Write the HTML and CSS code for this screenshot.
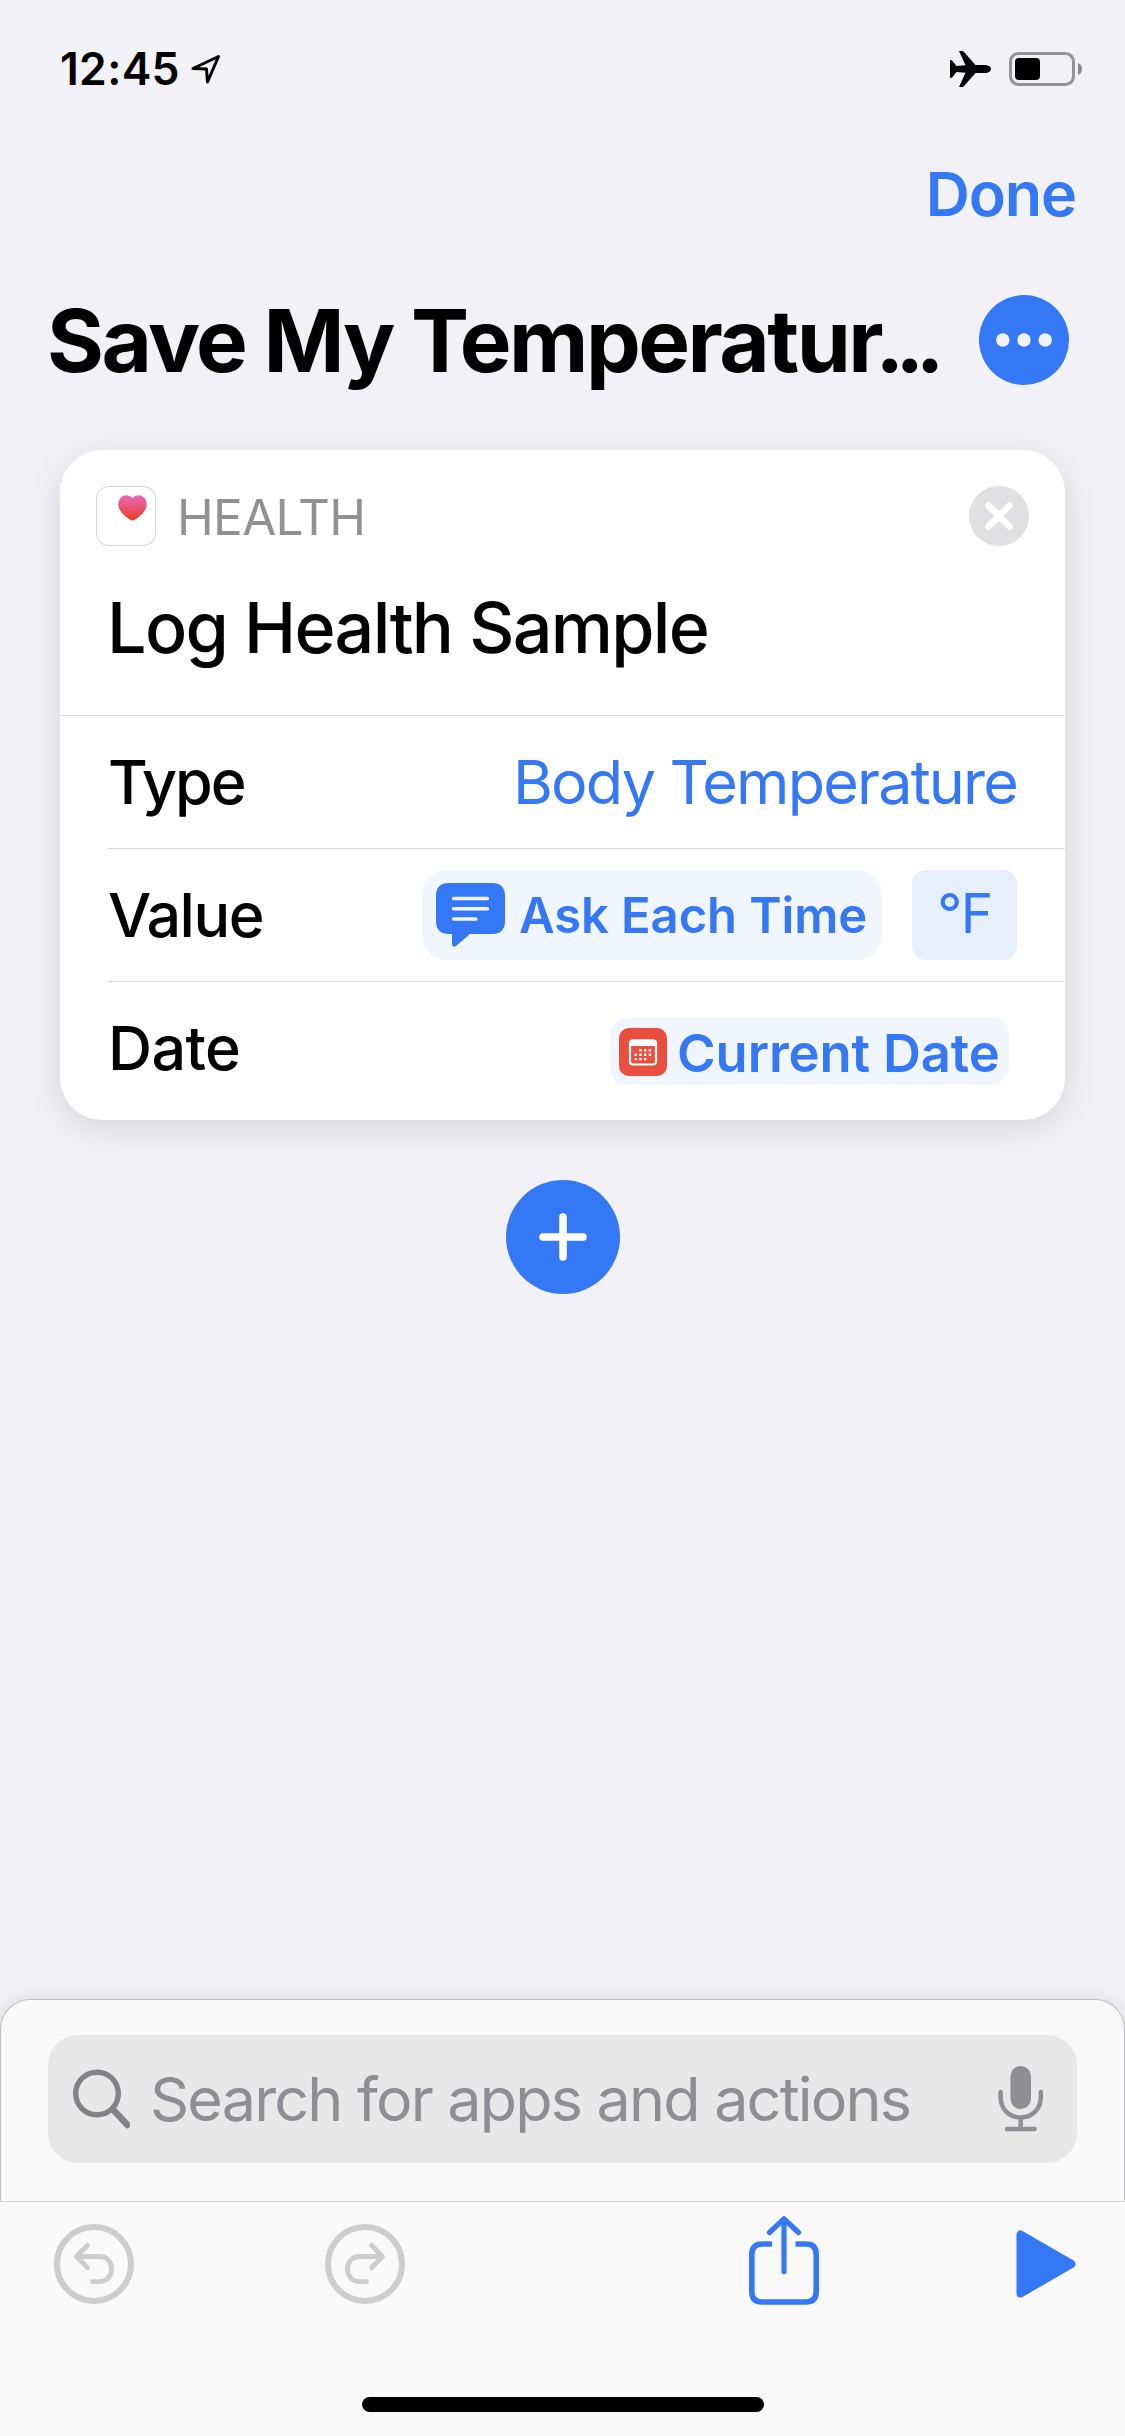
FILE: index.html
```html
<!DOCTYPE html>
<html lang="en">
<head>
    <meta charset="UTF-8">
    <meta name="viewport" content="width=device-width, initial-scale=1.0">
    <title>Save My Temperature</title>
    <link rel="stylesheet" href="styles.css">
</head>
<body>
    <div class="status-bar">
        <div class="status-left">
            <span class="time">12:45</span>
            <svg class="location" width="32" height="32" viewBox="0 0 32 32">
                <path d="M3 16.5 L28.5 4.5 L17.5 30 L16.5 17 Z" fill="none" stroke="#000" stroke-width="3" stroke-linejoin="round"/>
            </svg>
        </div>
        <div class="status-right">
            <svg width="41" height="36" viewBox="0 0 41 36">
                <path d="M9 0 H12 Q13.5 0 14.5 1.5 L25.5 14 H36 Q41 15 41 18 Q41 21 36 22 H25.5 L14.5 34.5 Q13.5 36 12 36 H9 L15.5 21.8 L6.5 21 L2.5 26 Q1.8 27 0 27 V9 Q1.8 9 2.5 10 L6.5 15 L15.5 14.2 Z"/>
            </svg>
            <svg width="74" height="34" viewBox="0 0 74 34">
                <rect x="1.5" y="1.5" width="63" height="31" rx="8" fill="none" stroke="#949397" stroke-width="3"/>
                <rect x="6" y="6" width="25" height="22" rx="4"/>
                <path d="M69 11 Q73 12.5 73 17 Q73 21.5 69 23 Z" fill="#8a898d"/>
            </svg>
        </div>
    </div>

    <div class="nav-bar">
        <a class="done">Done</a>
    </div>

    <div class="title-row">
        <h1>Save My Temperatur<span class="dots">...</span></h1>
        <svg width="90" height="90" viewBox="0 0 90 90">
            <circle cx="45" cy="45" r="45" fill="#3478f6"/>
            <circle cx="23.8" cy="45" r="6.7" fill="#f2f1f6"/>
            <circle cx="45" cy="45" r="6.7" fill="#f2f1f6"/>
            <circle cx="66.2" cy="45" r="6.7" fill="#f2f1f6"/>
        </svg>
    </div>

    <div class="content">
        <div class="card">
            <div class="card-header">
                <div class="app-row">
                    <div class="app-icon">
                        <svg width="60" height="60" viewBox="0 0 60 60">
                            <defs>
                                <linearGradient id="heart" x1="0" y1="0" x2="0" y2="1">
                                    <stop offset="0" stop-color="#eb6abc"/>
                                    <stop offset="1" stop-color="#ea3a23"/>
                                </linearGradient>
                            </defs>
                            <path d="M36.5 12 C33 8.5 28.5 8.5 25.5 11 C21 15 21.5 22 26 27 C29 30.5 34 34 36.5 34.6 C39 34 44 30.5 47 27 C51.5 22 52 15 47.5 11 C44.5 8.5 40 8.5 36.5 12 Z" fill="url(#heart)"/>
                        </svg>
                    </div>
                    <span class="app-name">HEALTH</span>
                    <svg width="60" height="60" viewBox="0 0 60 60">
                        <circle cx="30" cy="30" r="30" fill="#e0e0e2"/>
                        <path d="M19.5 19.5 L40.5 40.5 M40.5 19.5 L19.5 40.5" stroke="#fff" stroke-width="6.5" stroke-linecap="round"/>
                    </svg>
                </div>
                <h2>Log Health Sample</h2>
            </div>
            <div class="row">
                <span class="label type-label">Type</span>
                <span class="value">Body Temperature</span>
            </div>
            <div class="row">
                <span class="label">Value</span>
                <div class="ask-pill">
                    <svg width="70" height="65" viewBox="0 0 70 65">
                        <path d="M13 0 H56 Q69 0 69 13 V38 Q69 51 56 51 H34 L20 63 Q16 65 16 61 V51 H13 Q0 51 0 38 V13 Q0 0 13 0 Z" fill="#3478f6"/>
                        <path d="M17.5 15.5 H51.5 M17.5 25.7 H51.5 M17.5 36 H40" stroke="#f0f5fe" stroke-width="3.4" stroke-linecap="round"/>
                    </svg>
                    <span class="ask-text">Ask Each Time</span>
                </div>
                <div class="unit">°F</div>
            </div>
            <div class="row">
                <span class="label date-label">Date</span>
                <div class="date-pill">
                    <svg width="48" height="48" viewBox="0 0 48 48">
                        <rect width="48" height="48" rx="10" fill="#ea4e3d"/>
                        <rect x="11" y="12.5" width="26" height="24" rx="3" fill="none" stroke="#fff" stroke-width="2.2"/>
                        <path d="M10 18 V15 Q10 11.5 13.5 11.5 H34.5 Q38 11.5 38 15 V18 Z" fill="#fff"/>
                        <path d="M20.3 22.3 H33 M15.6 26.7 H33 M15.6 31.1 H29" stroke="#fff" stroke-width="2.4" stroke-dasharray="2.4 2.3"/>
                    </svg>
                    <span class="date-text">Current Date</span>
                </div>
            </div>
        </div>

        <svg class="add-button" width="114" height="114" viewBox="0 0 114 114">
            <circle cx="57" cy="57" r="57" fill="#3478f6"/>
            <path d="M57 37 V77 M37 57 H77" stroke="#fff" stroke-width="7.6" stroke-linecap="round"/>
        </svg>
    </div>

    <div class="search-panel">
        <div class="search-field">
            <svg width="60" height="62" viewBox="0 0 60 62">
                <circle cx="27" cy="25.5" r="21.3" fill="none" stroke="#828287" stroke-width="5.4"/>
                <path d="M42.5 41 L57.5 57" stroke="#828287" stroke-width="6.5" stroke-linecap="round"/>
            </svg>
            <span class="placeholder">Search for apps and actions</span>
            <svg width="46" height="68" viewBox="0 0 46 68">
                <rect x="12.5" y="1" width="20.5" height="43" rx="10.2" fill="#8e8e93"/>
                <path d="M2.6 27 V32 C2.6 44.5 11.5 52.5 22.7 52.5 S42.8 44.5 42.8 32 V27 M22.7 53 V63 M9 64 H36.5" fill="none" stroke="#8e8e93" stroke-width="4.5" stroke-linecap="round"/>
            </svg>
        </div>
    </div>

    <div class="toolbar">
        <div class="tools">
            <svg class="undo" width="80" height="80" viewBox="0 0 80 80">
                <circle cx="40" cy="40" r="37" fill="none" stroke="#cdcdcd" stroke-width="6"/>
                <path d="M33.5 21.3 L22.5 32.5 L33.5 43.7 M23 32.5 H45 C53 32.5 57.5 38 57.5 45 S53 57.7 45 57.7 H38.5" fill="none" stroke="#cdcdcd" stroke-width="4.8" stroke-linecap="round" stroke-linejoin="round"/>
            </svg>
            <svg class="redo" width="80" height="80" viewBox="0 0 80 80">
                <circle cx="40" cy="40" r="37" fill="none" stroke="#cdcdcd" stroke-width="6"/>
                <path d="M46.5 21.3 L57.5 32.5 L46.5 43.7 M57 32.5 H35 C27 32.5 22.5 38 22.5 45 S27 57.7 35 57.7 H41.5" fill="none" stroke="#cdcdcd" stroke-width="4.8" stroke-linecap="round" stroke-linejoin="round"/>
            </svg>
            <svg class="share" width="70" height="90" viewBox="0 0 70 90">
                <path d="M23 28 H13 Q2.8 28 2.8 38.5 V75.5 Q2.8 86 13 86 H57 Q67.2 86 67.2 75.5 V38.5 Q67.2 28 57 28 H46.5" fill="none" stroke="#3478f6" stroke-width="5.6"/>
                <path d="M35 4 V55.5 M20.5 16.5 L35 2.8 L49.5 16.5" fill="none" stroke="#3478f6" stroke-width="5.2" stroke-linecap="round" stroke-linejoin="round"/>
            </svg>
            <svg class="play" width="60" height="68" viewBox="0 0 60 68">
                <path d="M4.5 4.5 V63.5 L55.5 34 Z" fill="#3478f6" stroke="#3478f6" stroke-width="8" stroke-linejoin="round"/>
            </svg>
        </div>
        <div class="home-indicator"></div>
    </div>
</body>
</html>
```

FILE: styles.css
```css
* {
    box-sizing: border-box;
}
body {
    font-family: Inter, "Liberation Sans", sans-serif;
    background-color: #f2f1f6;
    color: #000;
    margin: 0;
    width: 1125px;
    height: 2436px;
    display: flex;
    flex-direction: column;
    overflow: hidden;
}
svg {
    display: block;
    flex-shrink: 0;
}
span, a, h1, h2 {
    white-space: nowrap;
}
.status-bar {
    height: 138px;
    padding: 0 42px 0 60px;
    display: flex;
    justify-content: space-between;
    align-items: center;
}
.status-left {
    display: flex;
    align-items: center;
    gap: 10px;
}
.time {
    font-size: 44.5px;
    font-weight: 600;
    letter-spacing: 0.3px;
}
.location {
    margin-bottom: 2px;
}
.status-right {
    display: flex;
    align-items: center;
    gap: 18px;
}
.nav-bar {
    height: 112px;
    padding-right: 49px;
    display: flex;
    justify-content: flex-end;
    align-items: center;
}
.done {
    color: #3478f6;
    font-size: 61px;
    font-weight: 600;
    letter-spacing: -1.1px;
}
.title-row {
    height: 180px;
    padding: 0 56px 0 47px;
    display: flex;
    justify-content: space-between;
    align-items: center;
}
h1 {
    margin: 0;
    font-size: 87px;
    font-weight: 700;
    letter-spacing: -2.5px;
}
.dots {
    margin-left: -6px;
    letter-spacing: -9px;
}
.content {
    flex: 1;
    padding: 20px 60px 0;
}
.card {
    height: 670px;
    background-color: #fff;
    border-radius: 42px;
    box-shadow: 0 8px 36px rgba(0,0,0,0.12);
}
.card-header {
    height: 266px;
    padding: 36px;
    border-bottom: 1px solid #d9d9db;
}
.app-row {
    display: flex;
    align-items: center;
}
.app-icon {
    width: 60px;
    height: 60px;
    border-radius: 13px;
    box-shadow: inset 0 0 0 1px #d6d6d6;
}
.app-name {
    flex: 1;
    margin-left: 21px;
    padding-top: 2px;
    color: #929294;
    font-size: 49.5px;
    line-height: 58px;
    letter-spacing: -0.7px;
}
h2 {
    margin: 40px 0 0 11px;
    font-size: 70px;
    line-height: 84px;
    font-weight: 500;
    letter-spacing: -1.7px;
}
.row {
    height: 133px;
    margin-left: 48px;
    padding-right: 48px;
    display: flex;
    align-items: center;
    border-bottom: 1px solid #d9d9db;
}
.row:last-child {
    border-bottom: none;
}
.label {
    flex: 1;
    font-size: 61px;
    font-weight: 500;
    letter-spacing: -1.5px;
}
.type-label {
    letter-spacing: -2px;
}
.date-label {
    padding-bottom: 2px;
    letter-spacing: -0.6px;
}
.value {
    color: #3478f6;
    font-size: 61px;
    letter-spacing: -1.8px;
}
.ask-pill {
    width: 460px;
    height: 90px;
    margin-right: 30px;
    padding-left: 14px;
    display: flex;
    align-items: center;
    gap: 13px;
    background-color: #f0f5fe;
    border-radius: 25px;
}
.ask-text {
    color: #3478f6;
    font-size: 49px;
    line-height: 88px;
    font-weight: 600;
    letter-spacing: -0.1px;
    padding-top: 2px;
}
.unit {
    width: 105px;
    height: 90px;
    color: #3478f6;
    background-color: #e6f0fd;
    border-radius: 14px;
    font-size: 55px;
    line-height: 86px;
    text-align: center;
    letter-spacing: -1.5px;
}
.date-pill {
    width: 399px;
    height: 67px;
    margin: 6px 8px 0 0;
    padding-left: 9px;
    display: flex;
    align-items: center;
    gap: 10px;
    background-color: #f0f5fe;
    border-radius: 18px;
}
.date-text {
    color: #3478f6;
    font-size: 52.5px;
    font-weight: 600;
    letter-spacing: -0.1px;
    padding-top: 2px;
}
.add-button {
    margin: 60px auto 0;
}
.search-panel {
    height: 202px;
    padding: 35px 47px 0;
    background-color: #f9f9f9;
    border: 1px solid #bfbfc1;
    border-bottom: none;
    border-radius: 30px 30px 0 0;
    box-shadow: 0 0 20px rgba(0,0,0,0.1);
}
.search-field {
    height: 128px;
    padding: 0 33px 0 22px;
    display: flex;
    align-items: center;
    background-color: #e8e8e8;
    border-radius: 30px;
}
.placeholder {
    flex: 1;
    margin-left: 20px;
    color: #8e8e93;
    font-size: 61px;
    letter-spacing: -1.8px;
}
.toolbar {
    height: 235px;
    padding-top: 15px;
    background-color: #f9f9f9;
    border-top: 1px solid #d9d9da;
}
.tools {
    height: 94px;
    padding: 0 49px 0 54px;
    display: flex;
    align-items: center;
}
.redo {
    margin-left: 191px;
}
.share {
    margin: -6px 0 0 344px;
}
.play {
    margin-left: auto;
}
.home-indicator {
    width: 402px;
    height: 15px;
    margin: 86px auto 0;
    background-color: #000;
    border-radius: 8px;
}
```
